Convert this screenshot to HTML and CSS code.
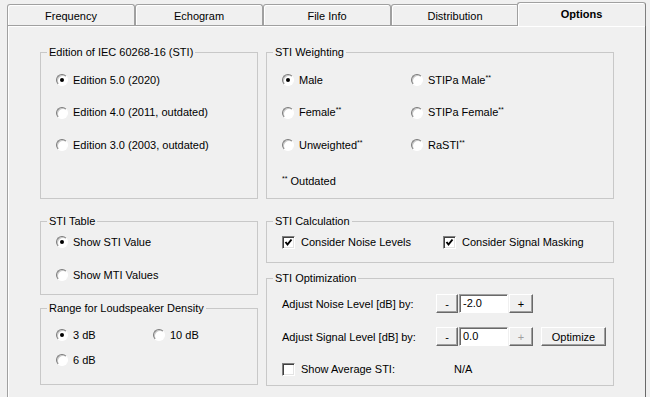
FILE: index.html
```html
<!DOCTYPE html>
<html lang="en">
<head>
  <meta charset="utf-8" />
  <title>Options</title>
  <link rel="stylesheet" href="styles.css">
</head>
<body>
  <div class="tabstrip">
    <div class="tab">Frequency</div>
    <div class="tab">Echogram</div>
    <div class="tab">File Info</div>
    <div class="tab">Distribution</div>
    <div class="tab active">Options</div>
  </div>
  <div class="pane">
    <div class="col col-left">
      <fieldset class="group g-edition">
        <legend>Edition of IEC 60268-16 (STI)</legend>
        <div class="body stack-edition">
          <label class="opt"><span class="radio on"></span><span>Edition 5.0 (2020)</span></label>
          <label class="opt"><span class="radio"></span><span>Edition 4.0 (2011, outdated)</span></label>
          <label class="opt"><span class="radio"></span><span>Edition 3.0 (2003, outdated)</span></label>
        </div>
      </fieldset>
      <fieldset class="group g-table">
        <legend>STI Table</legend>
        <div class="body stack-table">
          <label class="opt"><span class="radio on"></span><span>Show STI Value</span></label>
          <label class="opt"><span class="radio"></span><span>Show MTI Values</span></label>
        </div>
      </fieldset>
      <fieldset class="group g-range">
        <legend>Range for Loudspeaker Density</legend>
        <div class="body grid-range">
          <label class="opt"><span class="radio on"></span><span>3 dB</span></label>
          <label class="opt"><span class="radio"></span><span>10 dB</span></label>
          <label class="opt"><span class="radio"></span><span>6 dB</span></label>
        </div>
      </fieldset>
    </div>
    <div class="col col-right">
      <fieldset class="group g-weight">
        <legend>STI Weighting</legend>
        <div class="body grid-weight">
          <label class="opt"><span class="radio on"></span><span>Male</span></label>
          <label class="opt"><span class="radio"></span><span>STIPa Male<sup>**</sup></span></label>
          <label class="opt"><span class="radio"></span><span>Female<sup>**</sup></span></label>
          <label class="opt"><span class="radio"></span><span>STIPa Female<sup>**</sup></span></label>
          <label class="opt"><span class="radio"></span><span>Unweighted<sup>**</sup></span></label>
          <label class="opt"><span class="radio"></span><span>RaSTI<sup>**</sup></span></label>
        </div>
        <div class="note"><sup>**</sup> Outdated</div>
      </fieldset>
      <fieldset class="group g-calc">
        <legend>STI Calculation</legend>
        <div class="body grid-calc">
          <label class="opt"><span class="check on"><svg width="9" height="9" viewBox="0 0 9 9"><polyline points="1.5,4 3.5,6.5 7.5,1.5" fill="none" stroke="#000" stroke-width="2"/></svg></span><span>Consider Noise Levels</span></label>
          <label class="opt"><span class="check on"><svg width="9" height="9" viewBox="0 0 9 9"><polyline points="1.5,4 3.5,6.5 7.5,1.5" fill="none" stroke="#000" stroke-width="2"/></svg></span><span>Consider Signal Masking</span></label>
        </div>
      </fieldset>
      <fieldset class="group g-opt">
        <legend>STI Optimization</legend>
        <div class="body stack-opt">
          <div class="orow">
            <span class="olabel">Adjust Noise Level [dB] by:</span>
            <span class="btn step">-</span>
            <span class="field">-2.0</span>
            <span class="btn step plus">+</span>
          </div>
          <div class="orow">
            <span class="olabel">Adjust Signal Level [dB] by:</span>
            <span class="btn step">-</span>
            <span class="field">0.0</span>
            <span class="btn step plus disabled">+</span>
            <span class="btn optimize">Optimize</span>
          </div>
          <div class="orow short">
            <label class="opt avg"><span class="check"></span><span>Show Average STI:</span></label>
            <span>N/A</span>
          </div>
        </div>
      </fieldset>
    </div>
  </div>
</body>
</html>
```

FILE: styles.css
```css
body {
  margin: 0;
  width: 650px;
  height: 397px;
  overflow: hidden;
  background: #f0f0f0;
  color: #000;
  font-family: "Liberation Sans", Arial, sans-serif;
  font-size: 11px;
}
.tabstrip {
  display: flex;
  align-items: flex-end;
  height: 25px;
  padding-left: 7px;
}
.tab {
  box-sizing: border-box;
  width: 128px;
  height: 21px;
  padding-top: 1px;
  display: flex;
  align-items: center;
  justify-content: center;
  background: #f0f0f0;
  border: 1px solid #a0a0a0;
  border-bottom: 0;
  border-radius: 3px 3px 0 0;
  box-shadow: inset 1px 1px #fff;
}
.tab.active {
  position: relative;
  z-index: 1;
  width: 129px;
  height: 24px;
  margin-left: -2px;
  margin-bottom: -1px;
  padding-top: 0;
  padding-bottom: 2px;
  font-weight: bold;
  border-right-color: #808080;
}
.pane {
  box-sizing: border-box;
  width: 639px;
  height: 380px;
  margin-left: 7px;
  padding: 20px 0 0 32px;
  display: flex;
  gap: 8px;
  align-items: flex-start;
  border: 1px solid #a0a0a0;
  border-right-color: #696969;
  box-shadow: inset 1px 1px #fff;
}
.col {
  display: flex;
  flex-direction: column;
}
.col-left { width: 218px; }
.col-right { width: 348px; }

.group {
  box-sizing: border-box;
  margin: 0;
  padding: 0;
  min-width: 0;
  border: 1px solid #c8c8c8;
}
.group legend {
  margin-left: 6px;
  padding: 0 2px;
  line-height: 13px;
}
.body {
  padding-left: 15px;
}
.g-edition, .g-weight { height: 153px; }
.g-table { height: 80px; margin-top: 16px; }
.g-range { height: 83px; margin-top: 7px; }
.g-calc { height: 48px; margin-top: 16px; }
.g-opt { height: 114px; margin-top: 9px; }

.stack-edition {
  display: flex;
  flex-direction: column;
  gap: 19.5px;
  margin-top: 14.5px;
}
.stack-table {
  display: flex;
  flex-direction: column;
  gap: 20px;
  margin-top: 7.5px;
}
.grid-range {
  display: grid;
  grid-template-columns: 97px auto;
  row-gap: 12px;
  margin-top: 13.5px;
}
.grid-weight {
  display: grid;
  grid-template-columns: 129px auto;
  row-gap: 19.5px;
  margin-top: 14.5px;
}
.note {
  margin: 23px 0 0 15px;
  line-height: 13px;
}
.grid-calc {
  display: grid;
  grid-template-columns: 161px auto;
  margin-top: 8px;
}
.stack-opt {
  display: flex;
  flex-direction: column;
  margin-top: 9px;
}

.opt {
  display: flex;
  align-items: center;
  height: 13px;
  line-height: 13px;
  white-space: nowrap;
}
sup {
  font-size: 7px;
  line-height: 7px;
  vertical-align: top;
}
.radio {
  box-sizing: border-box;
  flex: none;
  width: 12px;
  height: 12px;
  margin-right: 5px;
  display: flex;
  align-items: center;
  justify-content: center;
  background: #fff;
  border: 1px solid;
  border-color: #7a7a7a #fff #fff #7a7a7a;
  border-radius: 50%;
  box-shadow: inset 1px 1px #c8c8c8;
}
.radio.on::after {
  content: "";
  width: 4px;
  height: 4px;
  border-radius: 50%;
  background: #000;
}
.check {
  box-sizing: border-box;
  flex: none;
  width: 13px;
  height: 13px;
  margin-right: 6px;
  display: flex;
  align-items: center;
  justify-content: center;
  background: #fff;
  border: 1px solid;
  border-color: #808080 #fff #fff #808080;
  box-shadow: inset 1px 1px #404040, inset -1px -1px #e3e3e3;
}

.orow {
  display: flex;
  align-items: center;
  height: 19px;
}
.orow + .orow { margin-top: 14px; }
.orow.short {
  height: 13px;
  margin-top: 16.5px;
}
.olabel { width: 154px; }
.avg { width: 172px; }
.btn {
  box-sizing: border-box;
  height: 19px;
  display: flex;
  align-items: center;
  justify-content: center;
  background: #f0f0f0;
  border: 1px solid;
  border-color: #fff #696969 #696969 #fff;
  box-shadow: inset -1px -1px #a0a0a0;
}
.step { width: 22px; }
.plus {
  width: 24px;
  margin-left: 1px;
}
.disabled { color: #a0a0a0; }
.optimize {
  width: 65px;
  margin-left: 8px;
}
.field {
  box-sizing: border-box;
  width: 49px;
  height: 19px;
  margin-left: 1px;
  padding: 2px 0 0 3px;
  background: #fff;
  border: 1px solid;
  border-color: #a0a0a0 #fff #fff #a0a0a0;
  box-shadow: inset 1px 1px #696969;
}
```
